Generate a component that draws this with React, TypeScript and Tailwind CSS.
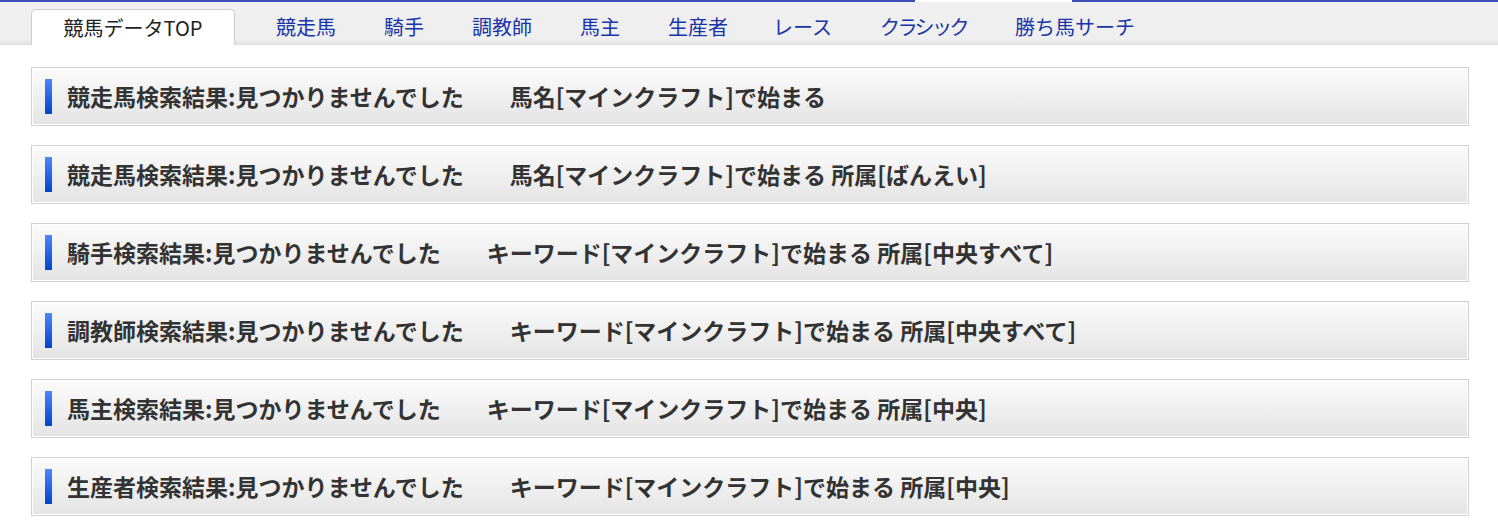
import React from "react";

const navItems: { label: string; cls: string }[] = [
  { label: "競走馬", cls: "" },
  { label: "騎手", cls: "" },
  { label: "調教師", cls: "" },
  { label: "馬主", cls: "" },
  { label: "生産者", cls: "" },
  { label: "レース", cls: "ml-[-3px]" },
  { label: "クラシック", cls: "tracking-[-2.5px]" },
  { label: "勝ち馬サーチ", cls: "" },
];

const rows = [
  "競走馬検索結果:見つかりませんでした　　馬名[マインクラフト]で始まる",
  "競走馬検索結果:見つかりませんでした　　馬名[マインクラフト]で始まる 所属[ばんえい]",
  "騎手検索結果:見つかりませんでした　　キーワード[マインクラフト]で始まる 所属[中央すべて]",
  "調教師検索結果:見つかりませんでした　　キーワード[マインクラフト]で始まる 所属[中央すべて]",
  "馬主検索結果:見つかりませんでした　　キーワード[マインクラフト]で始まる 所属[中央]",
  "生産者検索結果:見つかりませんでした　　キーワード[マインクラフト]で始まる 所属[中央]",
];

export default function App() {
  return (
    <div className="w-[1498px] h-[532px] bg-white overflow-hidden" style={{ fontFamily: '"Noto Sans CJK JP", "Noto Sans", sans-serif' }}>
      {/* top line */}
      <div className="flex h-[2px]">
        <div className="w-[915px] bg-[#3a4fb6]" />
        <div className="w-[157px] bg-white" />
        <div className="flex-1 bg-[#3a4fb6]" />
      </div>
      {/* nav */}
      <div className="h-[43px] flex items-end bg-[linear-gradient(to_bottom,#efefef_0%,#efefef_86%,#e1e1e1_100%)]">
        <div className="ml-[31px] w-[204px] h-[36px] bg-white border border-b-0 border-[#cdcdcd] rounded-t-[5px] flex items-center justify-center text-[20px] text-[#222] leading-none">
          競馬データTOP
        </div>
        <div className="ml-[17px] flex h-[36px] items-center">
          {navItems.map((n) => (
            <div key={n.label} className={`px-[24px] text-[20px] leading-none text-[#1834a8] ${n.cls}`}>
              {n.label}
            </div>
          ))}
        </div>
      </div>
      {/* panels */}
      <div className="ml-[31px] w-[1438px] mt-[22px] flex flex-col gap-[19px]">
        {rows.map((r, i) => (
          <div key={i} className="border border-[#d2d2d2] p-px bg-white">
            <div className="h-[55px] flex items-center pl-[12px] bg-[linear-gradient(to_bottom,#fbfbfb,#e4e4e4)]">
              <div className="w-[7px] h-[35px] bg-[linear-gradient(to_bottom,#4d86fb,#0044d0)]" />
              <div className="ml-[15px] text-[23px] font-bold text-[#333] leading-none whitespace-pre">{r}</div>
            </div>
          </div>
        ))}
      </div>
    </div>
  );
}
